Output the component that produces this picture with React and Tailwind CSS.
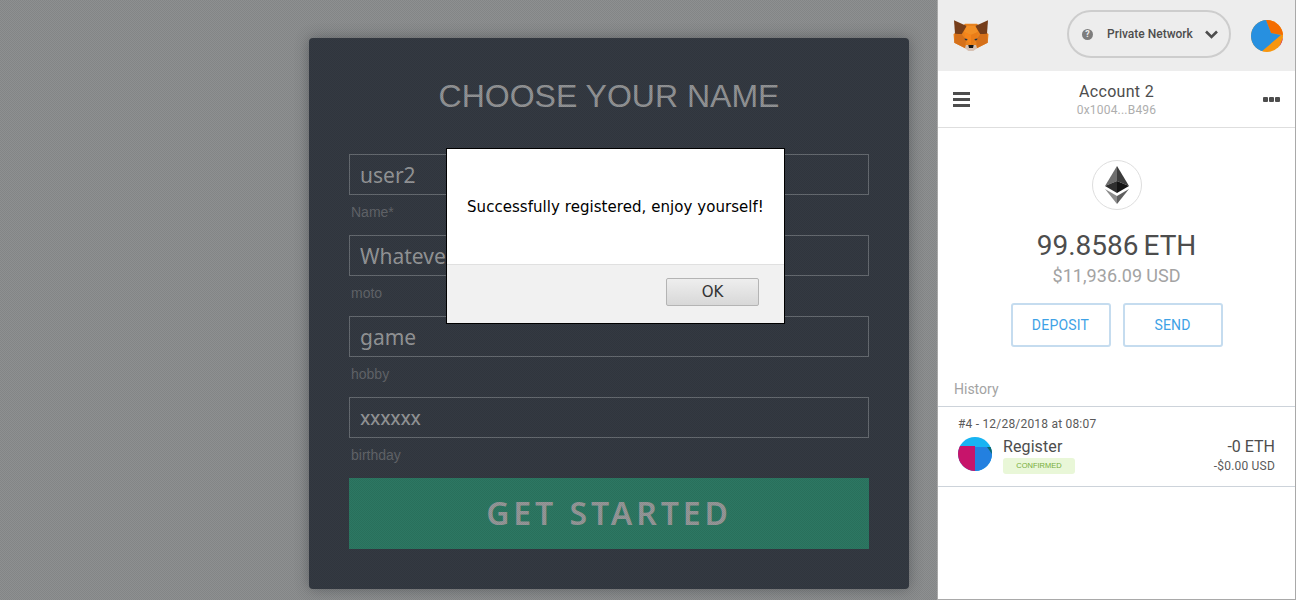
const fields = [
  { value: "user2", label: "Name*", font: "font-['Noto_Sans',sans-serif]" },
  { value: "Whatever", label: "moto", font: "font-['Noto_Sans',sans-serif]" },
  { value: "game", label: "hobby", font: "font-['Noto_Sans',sans-serif]" },
  { value: "xxxxxx", label: "birthday", font: "font-['Roboto',sans-serif] tracking-[-0.3px]" },
];

function Fox() {
  return (
    <svg width="36" height="34" viewBox="0 0 36 34">
      <polygon points="12,5.7 24,5.7 35.5,16.3 34.7,24.7 24,30.3 12,30.3 1.3,24.7 0.5,16.3" fill="#e8821e" />
      <polygon points="1,2.3 13.7,8 8.7,16.3 2,15.7" fill="#763e1a" />
      <polygon points="35,2.3 22.3,8 27.3,16.3 34,15.7" fill="#763e1a" />
      <polygon points="13.7,8 22.3,8 25,14 18,17 11,14" fill="#f28f25" />
      <polygon points="2,16 8.7,16.3 13,22 12,30 1.3,24.7" fill="#d5701a" />
      <polygon points="34,16 27.3,16.3 23,22 24,30 34.7,24.7" fill="#d5701a" />
      <polygon points="11,14 18,17 18,27 13,22" fill="#f6851b" />
      <polygon points="25,14 18,17 18,27 23,22" fill="#ea7d18" />
      <polygon points="11.5,20.5 14.5,21 14,22.5 12,22" fill="#233447" />
      <polygon points="24.5,20.5 21.5,21 22,22.5 24,22" fill="#233447" />
      <polygon points="13,27 23,27 24,30.3 20.3,33 15.3,33 12,30.3" fill="#d7c1b3" />
      <polygon points="15.3,27 20.7,27 20,30 16,30" fill="#161616" />
    </svg>
  );
}

function NetworkAvatar() {
  return (
    <svg width="32" height="32" viewBox="0 0 32 32">
      <defs>
        <clipPath id="netClip">
          <circle cx="16" cy="16" r="16" />
        </clipPath>
      </defs>
      <g clipPath="url(#netClip)">
        <rect width="32" height="32" fill="#f7960f" />
        <polygon points="15,0 32,0 32,15 20,13" fill="#f46d00" />
        <polygon points="32,18 32,32 26,32" fill="#c8177a" />
        <polygon points="15,0 20,13 30,15 10,32 0,32 0,0" fill="#2790e0" />
      </g>
    </svg>
  );
}

function TxAvatar() {
  return (
    <svg width="34" height="34" viewBox="0 0 34 34">
      <defs>
        <clipPath id="txClip">
          <circle cx="17" cy="17" r="17" />
        </clipPath>
      </defs>
      <g clipPath="url(#txClip)">
        <rect width="34" height="34" fill="#18b4f2" />
        <rect x="0" y="9" width="17" height="25" fill="#c7146b" />
        <rect x="17" y="10" width="17" height="24" fill="#2380e0" />
        <polygon points="29,10 34,10 34,17" fill="#0b6a6a" />
      </g>
    </svg>
  );
}

function EthLogo() {
  return (
    <svg width="24" height="38" viewBox="0 0 24 38">
      <polygon points="12,0 0,20 12,15" fill="#6e6e6e" />
      <polygon points="12,0 24,20 12,15" fill="#3c3c3c" />
      <polygon points="12,15 0,20 12,27" fill="#2f2f2f" />
      <polygon points="12,15 24,20 12,27" fill="#141414" />
      <polygon points="0,23 12,38 12,30" fill="#8c8c8c" />
      <polygon points="24,23 12,38 12,30" fill="#5f5f5f" />
    </svg>
  );
}

function NetworkMenu() {
  return (
    <div className="ml-[78px] flex h-[48px] w-[164px] items-center rounded-[24px] border-2 border-[#cdcdcd] pl-[13px] text-[12px] font-medium text-[#4d4d4d]">
      <span className="flex h-[11px] w-[11px] items-center justify-center rounded-full bg-[#7d7d7d] text-[9px] font-bold leading-none text-[#ededed]">
        ?
      </span>
      <span className="ml-[14px] whitespace-nowrap">Private Network</span>
      <svg className="ml-[12px]" width="13" height="9" viewBox="0 0 13 9">
        <polyline points="1,1.5 6.5,7 12,1.5" fill="none" stroke="#4d4d4d" strokeWidth="2.6" />
      </svg>
    </div>
  );
}

function Wallet() {
  return (
    <div className="flex h-[600px] w-[359px] flex-none flex-col border-x border-b border-[#a9a9a9] bg-white font-['Roboto',sans-serif] text-[#4d4d4d]">
      <div className="flex h-[71px] flex-none items-center bg-[#ededed] pb-[3px] pl-[15px]">
        <div className="mt-[1px]">
          <Fox />
        </div>
        <NetworkMenu />
        <div className="ml-[20px] mt-[3px]">
          <NetworkAvatar />
        </div>
      </div>
      <div className="flex h-[57px] flex-none items-center border-b border-[#dedede] px-[15px]">
        <div className="flex w-[17px] flex-col gap-[3px]">
          <span className="h-[3px] bg-[#4d4d4d]" />
          <span className="h-[3px] bg-[#4d4d4d]" />
          <span className="h-[3px] bg-[#4d4d4d]" />
        </div>
        <div className="flex flex-1 flex-col items-center pt-[1px]">
          <span className="text-[16px] leading-[20px] tracking-[0.3px]">Account 2</span>
          <span className="text-[12px] leading-[16px] tracking-[0.2px] text-[#aeaeae]">0x1004...B496</span>
        </div>
        <div className="flex gap-[1px]">
          <span className="h-[5px] w-[5px] rounded-[1px] bg-[#4d4d4d]" />
          <span className="h-[5px] w-[5px] rounded-[1px] bg-[#4d4d4d]" />
          <span className="h-[5px] w-[5px] rounded-[1px] bg-[#4d4d4d]" />
        </div>
      </div>
      <div className="flex flex-none flex-col items-center pt-[32px]">
        <div className="flex h-[50px] w-[50px] items-center justify-center rounded-full border border-[#dedede]">
          <EthLogo />
        </div>
        <div className="mt-[17px] text-[28px] leading-[37px]">
          99.8586<span className="ml-[5px]">ETH</span>
        </div>
        <div className="mt-[1px] text-[18px] leading-[22px] tracking-[0.05px] text-[#a3a3a3]">
          $11,936.09<span className="ml-[4px]">USD</span>
        </div>
        <div className="mt-[16px] flex gap-[12px]">
          <button className="h-[44px] w-[100px] rounded-[3px] border-2 border-[#c5dcef] text-[14px] tracking-[0.2px] text-[#3ea2e6]">DEPOSIT</button>
          <button className="h-[44px] w-[100px] rounded-[3px] border-2 border-[#c5dcef] text-[14px] tracking-[0.2px] text-[#3ea2e6]">SEND</button>
        </div>
      </div>
      <div className="mt-[33px] border-b border-[#cdd3da] px-[16px] pb-[7px] text-[14px] leading-[19px] text-[#a3a3a3]">
        History
      </div>
      <div className="h-[80px] flex-none border-b border-[#cdd3da] px-[20px] pt-[9px]">
        <div className="text-[12px] leading-[16px] tracking-[0.2px] text-[#5a5a5a]">#4 - 12/28/2018 at 08:07</div>
        <div className="mt-[5px] flex">
          <TxAvatar />
          <div className="ml-[11px] flex flex-col">
            <span className="text-[16px] leading-[20px] tracking-[0.1px]">Register</span>
            <span className="mt-[1px] flex h-[16px] w-[72px] items-center justify-center rounded-[3px] bg-[#e9f7d8] font-['Liberation_Sans',sans-serif] text-[7.5px] text-[#76ad3a]">
              CONFIRMED
            </span>
          </div>
          <div className="ml-auto flex flex-col items-end">
            <span className="text-[16px] leading-[20px]">-0 ETH</span>
            <span className="mt-[1px] text-[12px] leading-[16px] tracking-[0.2px] text-[#5a5a5a]">-$0.00 USD</span>
          </div>
        </div>
      </div>
    </div>
  );
}

function AlertDialog() {
  return (
    <div className="absolute left-[446px] top-[148px] flex h-[176px] w-[339px] flex-col border border-black bg-white">
      <div className="flex h-[115px] flex-none items-center pl-[20px] pt-[2px] font-['DejaVu_Sans',sans-serif] text-[15px] tracking-[0.05px] text-black">
        Successfully registered, enjoy yourself!
      </div>
      <div className="flex flex-1 items-start justify-end border-t border-[#e0e0e0] bg-[#f1f1f1] pr-[25px] pt-[13px]">
        <button className="h-[28px] w-[93px] rounded-[2px] border border-[#b4b4b4] bg-gradient-to-b from-[#eeeeee] to-[#d8d8d8] font-['DejaVu_Sans',sans-serif] text-[15px] text-[#333333]">
          OK
        </button>
      </div>
    </div>
  );
}

export default function App() {
  return (
    <div className="relative flex h-[600px] w-[1296px] overflow-hidden bg-[#8e9091]">
      <div className="w-[937px] flex-none pl-[309px] pt-[38px]">
        <div className="h-[551px] w-[600px] rounded-[4px] bg-[#343a42] px-[40px] pt-[37px] shadow-[0_0_14px_rgba(40,45,50,0.45)]">
          <h1 className="text-center font-['Liberation_Sans',sans-serif] text-[32px] leading-[42px] text-[#929496]">
            CHOOSE YOUR NAME
          </h1>
          <div className="mt-[37px] flex flex-col">
            {fields.map((field) => (
              <div key={field.label} className="h-[81px]">
                <input
                  readOnly
                  value={field.value}
                  className={`h-[41px] w-full border border-[#666b71] bg-transparent px-[10px] text-[21px] text-[#949698] outline-none ${field.font}`}
                />
                <div className="mt-[7px] pl-[2px] font-['Liberation_Sans',sans-serif] text-[14px] leading-[20px] text-[#62656a]">
                  {field.label}
                </div>
              </div>
            ))}
          </div>
          <button className="h-[71px] w-full bg-[#2d7863] pb-[2px] font-['Noto_Sans',sans-serif] text-[32px] font-semibold tracking-[3.9px] text-[#969899]">
            GET STARTED
          </button>
        </div>
      </div>
      <Wallet />
      <div className="pointer-events-none absolute inset-y-0 left-0 w-[937px] bg-[repeating-conic-gradient(#0000_0_25%,#00000014_0_50%)] bg-[length:2px_2px]" />
      <AlertDialog />
    </div>
  );
}
